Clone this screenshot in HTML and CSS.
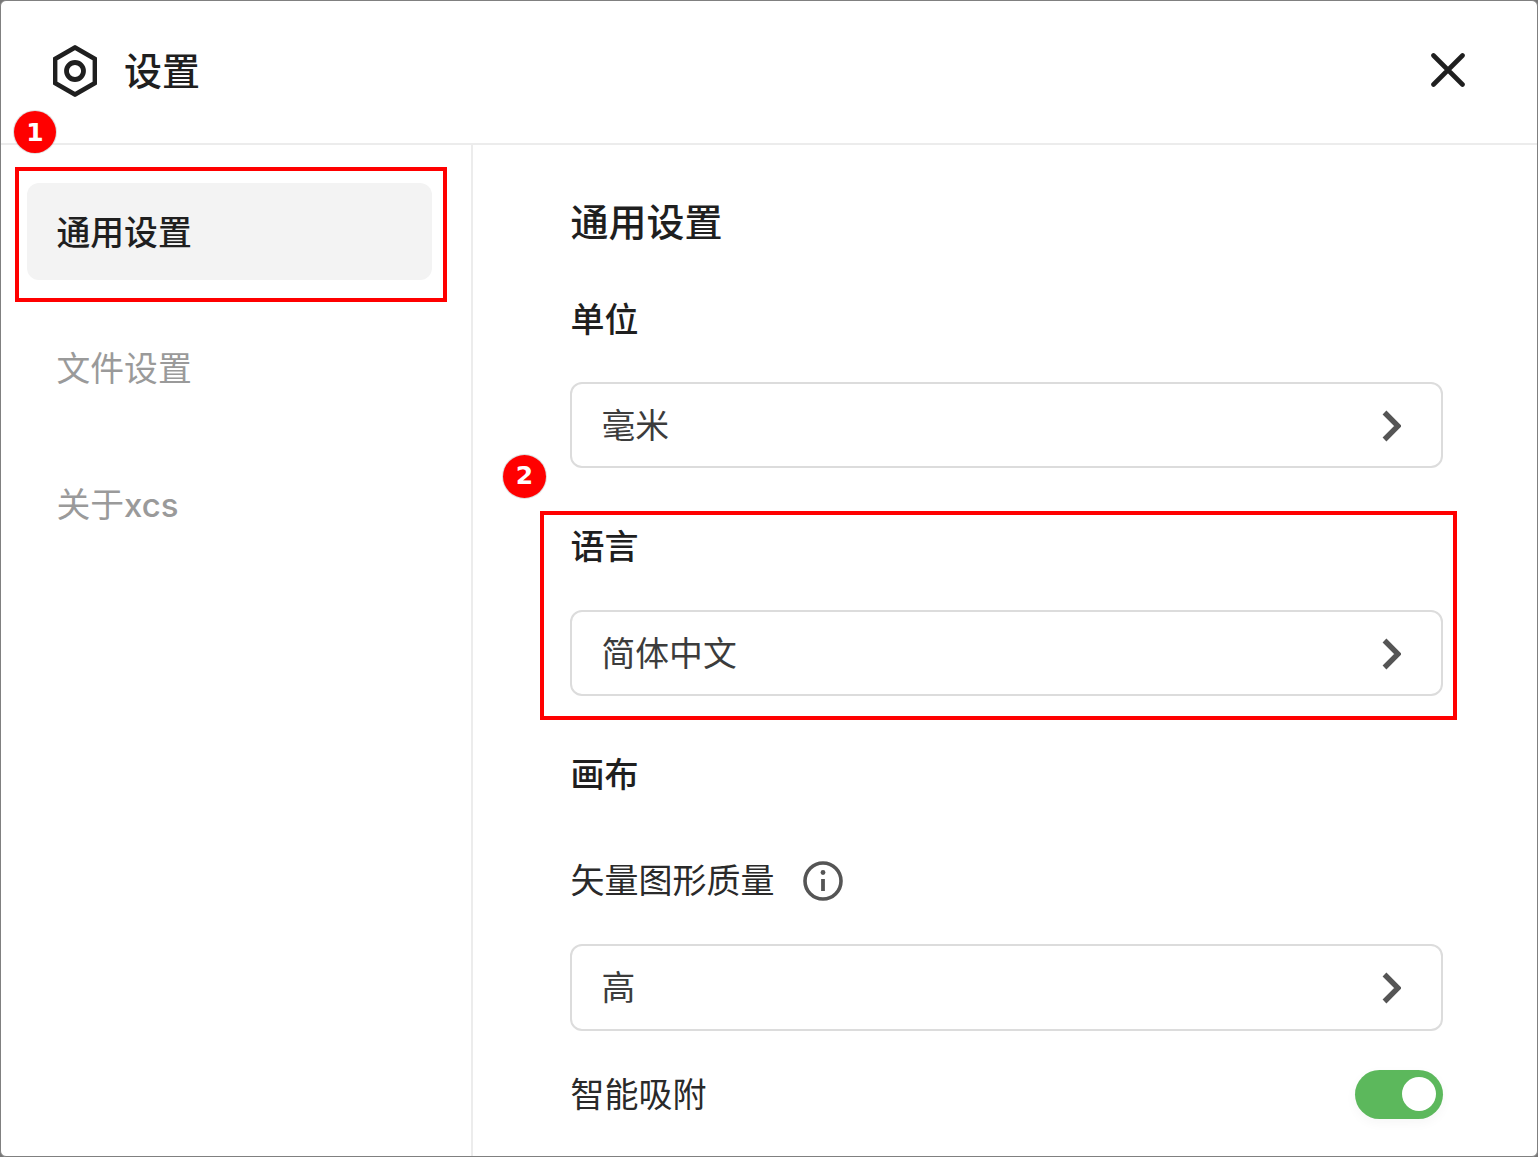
FILE: index.html
```html
<!DOCTYPE html>
<html lang="zh-CN">
<head>
<meta charset="utf-8">
<title>设置</title>
<link rel="stylesheet" href="styles.css">
</head>
<body>
<div class="window">
  <header class="header">
    <div class="brand">
      <svg class="hex" viewBox="0 0 44 52" aria-hidden="true"><path d="M22 2.5 42 14V38L22 49.5 2 38V14Z"/><circle cx="22" cy="26" r="8.5"/></svg>
      <h1 class="title">设置</h1>
    </div>
    <svg class="close" viewBox="0 0 34 34" aria-hidden="true"><path d="M2.5 2.5 31.5 31.5M31.5 2.5 2.5 31.5"/></svg>
  </header>
  <div class="body">
    <nav class="side">
      <a class="nav active"><span>通用设置</span></a>
      <a class="nav"><span>文件设置</span></a>
      <a class="nav"><span>关于<span class="latin">xcs</span></span></a>
    </nav>
    <main class="main">
      <h2 class="page-title">通用设置</h2>
      <h3 class="label first">单位</h3>
      <div class="field"><span class="value">毫米</span><svg class="chev" viewBox="0 0 20 32" aria-hidden="true"><path d="M3.5 2.5 17 16 3.5 29.5"/></svg></div>
      <h3 class="label">语言</h3>
      <div class="field"><span class="value">简体中文</span><svg class="chev" viewBox="0 0 20 32" aria-hidden="true"><path d="M3.5 2.5 17 16 3.5 29.5"/></svg></div>
      <h3 class="label">画布</h3>
      <div class="row sub">
        <span class="row-text">矢量图形质量</span>
        <svg class="info" viewBox="0 0 40 40" aria-hidden="true"><circle class="ring" cx="20" cy="20" r="18"/><path class="stem" d="M20 18V30"/><circle class="dot" cx="20" cy="11.5" r="2.4"/></svg>
      </div>
      <div class="field tall"><span class="value">高</span><svg class="chev" viewBox="0 0 20 32" aria-hidden="true"><path d="M3.5 2.5 17 16 3.5 29.5"/></svg></div>
      <div class="row between snap">
        <span class="row-text snap-text">智能吸附</span>
        <span class="toggle"><span class="knob"></span></span>
      </div>
    </main>
  </div>
  <div class="mark box-one"></div>
  <div class="mark box-two"></div>
  <div class="badge badge-one">1</div>
  <div class="badge badge-two">2</div>
</div>
</body>
</html>
```

FILE: styles.css
```css
* { box-sizing: border-box; }
html, body { margin: 0; height: 100%; background: #777; }
body { font-family: "Noto Sans CJK SC", "Liberation Sans", sans-serif; color: #1f1f1f; overflow: hidden; }
.window { position: relative; height: 1157px; background: #fff; border: 1px solid #808080; border-radius: 6px; overflow: hidden; display: flex; flex-direction: column; }
.header { height: 144px; flex: none; display: flex; align-items: center; justify-content: space-between; padding: 0 72px 3px 52px; border-bottom: 2px solid #ececec; }
.brand { display: flex; align-items: center; gap: 27px; }
.hex { width: 44px; height: 52px; fill: none; stroke: #1f1f1f; stroke-width: 4.8; stroke-linejoin: round; }
.title { margin: 0 0 4px; font-size: 38px; line-height: 48px; font-weight: 500; }
.close { width: 34px; height: 34px; margin-bottom: 2px; fill: none; stroke: #1f1f1f; stroke-width: 4.6; stroke-linecap: round; }
.body { flex: 1; display: flex; min-height: 0; }
.side { width: 472px; flex: none; border-right: 2px solid #ececec; padding: 38px 39px 0 26px; display: flex; flex-direction: column; gap: 39px; }
.nav { height: 97px; flex: none; display: flex; align-items: center; padding: 0 0 3px 29.5px; border-radius: 12px; font-size: 33.8px; color: #9a9a9a; }
.nav.active { background: #f3f3f3; color: #1f1f1f; font-weight: 500; }
.latin { font-family: "Inter", "Liberation Sans", sans-serif; font-weight: 500; font-size: 33px; }
.main { flex: 1; padding: 50px 94px 0 97.5px; }
.page-title { margin: 0; font-size: 38px; line-height: 50px; font-weight: 500; }
.label { margin: 55px 0 43px; font-size: 34px; line-height: 44px; font-weight: 500; }
.label.first { margin: 51px 0 42px; }
.field { height: 86px; margin-left: -0.5px; border: 2px solid #dcdcdc; border-radius: 12px; display: flex; align-items: center; justify-content: space-between; padding: 0 40px 0 29.5px; font-size: 33.8px; color: #3c3c3c; }
.value { padding-bottom: 4px; }
.field.tall { height: 87px; }
.chev { width: 20px; height: 32px; margin-top: 1px; fill: none; stroke: #555; stroke-width: 5.4; }
.row { display: flex; align-items: center; font-size: 34px; color: #2a2a2a; }
.sub { gap: 28px; height: 44px; margin-top: 61px; margin-bottom: 44px; }
.info { width: 40px; height: 40px; margin-top: 6px; fill: none; stroke: #555; }
.ring { stroke-width: 3.6; }
.stem { stroke-width: 3.8; }
.dot { fill: #555; stroke: none; }
.between { justify-content: space-between; }
.snap { height: 50px; margin-top: 38px; }
.snap-text { padding-bottom: 3px; }
.toggle { width: 88px; height: 49px; border-radius: 25px; background: #5cb85c; display: flex; align-items: center; justify-content: flex-end; padding-right: 7px; box-shadow: 0 4px 12px rgba(0,0,0,.04); }
.knob { width: 34px; height: 34px; border-radius: 50%; background: #fff; }
.mark { position: absolute; border: 4px solid #f00; pointer-events: none; }
.box-one { left: 14px; top: 166px; width: 432px; height: 135px; }
.box-two { left: 539px; top: 510px; width: 917px; height: 209px; }
.badge { position: absolute; width: 42px; height: 42px; border-radius: 50%; background: #f00; color: #fff; font-family: "DejaVu Sans", sans-serif; font-weight: 700; font-size: 25px; line-height: 44px; text-align: center; box-shadow: 0 0 0 1px rgba(200,200,200,.6); }
.badge-one { left: 13px; top: 110px; }
.badge-two { left: 502px; top: 454px; width: 43px; height: 43px; line-height: 42px; }
```
